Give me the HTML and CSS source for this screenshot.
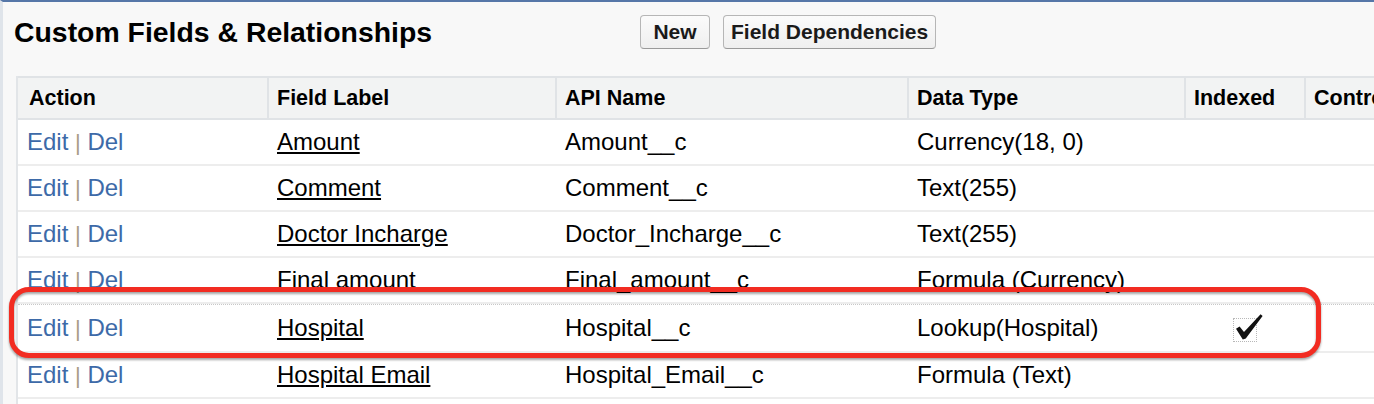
FILE: index.html
```html
<!DOCTYPE html>
<html>
<head>
<meta charset="utf-8">
<link rel="stylesheet" href="styles.css">
</head>
<body>
<div class="page">
  <div class="titlebar">
    <h2 class="title">Custom Fields &amp; Relationships</h2>
    <div class="buttons">
      <button class="btn btn-new">New</button>
      <button class="btn">Field Dependencies</button>
    </div>
  </div>
  <div class="list">
    <div class="row head">
      <div class="cell c1">Action</div>
      <div class="cell">Field Label</div>
      <div class="cell">API Name</div>
      <div class="cell">Data Type</div>
      <div class="cell">Indexed</div>
      <div class="cell">Controlling Field</div>
    </div>
    <div class="row">
      <div class="cell c1"><span class="actions"><a class="act">Edit</a> <span class="sep">|</span> <a class="act">Del</a></span></div>
      <div class="cell"><a class="lbl">Amount</a></div>
      <div class="cell">Amount__c</div>
      <div class="cell">Currency(18, 0)</div>
      <div class="cell"></div>
      <div class="cell"></div>
    </div>
    <div class="row">
      <div class="cell c1"><span class="actions"><a class="act">Edit</a> <span class="sep">|</span> <a class="act">Del</a></span></div>
      <div class="cell"><a class="lbl">Comment</a></div>
      <div class="cell">Comment__c</div>
      <div class="cell">Text(255)</div>
      <div class="cell"></div>
      <div class="cell"></div>
    </div>
    <div class="row">
      <div class="cell c1"><span class="actions"><a class="act">Edit</a> <span class="sep">|</span> <a class="act">Del</a></span></div>
      <div class="cell"><a class="lbl">Doctor Incharge</a></div>
      <div class="cell">Doctor_Incharge__c</div>
      <div class="cell">Text(255)</div>
      <div class="cell"></div>
      <div class="cell"></div>
    </div>
    <div class="row">
      <div class="cell c1"><span class="actions"><a class="act">Edit</a> <span class="sep">|</span> <a class="act">Del</a></span></div>
      <div class="cell"><a class="lbl plain">Final amount</a></div>
      <div class="cell">Final_amount__c</div>
      <div class="cell">Formula (Currency)</div>
      <div class="cell"></div>
      <div class="cell"></div>
    </div>
    <div class="row focus">
      <div class="cell c1"><span class="actions"><a class="act">Edit</a> <span class="sep">|</span> <a class="act">Del</a></span></div>
      <div class="cell"><a class="lbl">Hospital</a></div>
      <div class="cell">Hospital__c</div>
      <div class="cell">Lookup(Hospital)</div>
      <div class="cell center">
        <span class="checkbox">
          <svg class="check" width="24" height="24" viewBox="0 0 24 24">
            <path d="M3 10.8 L6.6 8.6 L11 14 L27.6 -3.8 L29.6 -2 L12.8 20.4 L9.8 21.6 Z" fill="#111"/>
          </svg>
        </span>
      </div>
      <div class="cell"></div>
    </div>
    <div class="row">
      <div class="cell c1"><span class="actions"><a class="act">Edit</a> <span class="sep">|</span> <a class="act">Del</a></span></div>
      <div class="cell"><a class="lbl">Hospital Email</a></div>
      <div class="cell">Hospital_Email__c</div>
      <div class="cell">Formula (Text)</div>
      <div class="cell"></div>
      <div class="cell"></div>
    </div>
    <div class="row">
      <div class="cell c1"></div>
      <div class="cell"></div>
      <div class="cell"></div>
      <div class="cell"></div>
      <div class="cell"></div>
      <div class="cell"></div>
    </div>
  </div>
  <div class="highlight"></div>
</div>
</body>
</html>
```

FILE: styles.css
```css
html, body {
  margin: 0;
  padding: 0;
  overflow: hidden;
  background: #f8f8f8;
}
body {
  font-family: "Liberation Sans", Arial, Helvetica, sans-serif;
  color: #000;
}
.page {
  position: relative;
  border-top: 2px solid #5677a8;
  border-left: 3px solid #dfe4ea;
  padding-left: 11px;
  min-height: 404px;
  box-sizing: border-box;
}
.titlebar {
  height: 60px;
  display: flex;
  align-items: center;
}
.title {
  margin: 0;
  flex: 0 0 626px;
  font-size: 28.4px;
  font-weight: bold;
  line-height: 32px;
  color: #000;
}
.buttons {
  display: flex;
  gap: 13px;
}
.btn {
  height: 34px;
  box-sizing: border-box;
  padding: 0 7px;
  font-family: "Liberation Sans", Arial, sans-serif;
  font-size: 21px;
  font-weight: bold;
  color: #1a1a1a;
  background: linear-gradient(#fbfbfb, #efefef);
  border: 1px solid #b6b6b6;
  border-bottom-color: #9a9a9a;
  border-radius: 4px;
}
.btn-new {
  width: 70px;
}
.list {
  margin-top: 14px;
  margin-left: 2px;
  border-left: 2px solid #e2e5e8;
  width: 1500px;
  background: #fff;
}
.row {
  display: grid;
  grid-template-columns: 249px 288px 352px 277px 120px 214px;
  height: 46px;
  box-sizing: border-box;
  border-bottom: 2px solid #ededed;
  font-size: 24px;
}
.cell {
  display: flex;
  align-items: center;
  padding-left: 8px;
  border-left: 2px solid transparent;
  white-space: nowrap;
  overflow: hidden;
}
.cell.c1 {
  padding-left: 9px;
  border-left: 0;
}
.head {
  height: 44px;
  background: #f2f3f3;
  border-top: 2px solid #e0e3e6;
  border-bottom: 2px solid #e0e3e6;
  font-size: 21.5px;
  font-weight: bold;
}
.head .cell {
  border-left-color: #e0e3e6;
}
.head .cell.c1 {
  padding-left: 11px;
}
.actions {
  white-space: pre;
}
.act {
  color: #3d6aa8;
}
.sep {
  color: #a89c86;
  font-size: 22px;
}
.lbl {
  color: #000;
  text-decoration: underline;
}
.lbl.plain {
  text-decoration: none;
}
.focus {
  height: 49px;
  border-top: 1px dotted #c8c8c8;
}
.center {
  justify-content: center;
  padding-left: 0;
}
.checkbox {
  display: block;
  width: 24px;
  height: 24px;
  box-sizing: border-box;
  border: 1px dotted #b8b8b8;
  position: relative;
  top: 2px;
}
.check {
  display: block;
  overflow: visible;
  margin: -1px;
}
.highlight {
  position: absolute;
  left: 6px;
  top: 285px;
  width: 1312px;
  height: 71px;
  box-sizing: border-box;
  border: 5px solid #f22c22;
  border-radius: 20px;
  filter: drop-shadow(0 2px 1px rgba(0, 0, 0, 0.35));
}
```
